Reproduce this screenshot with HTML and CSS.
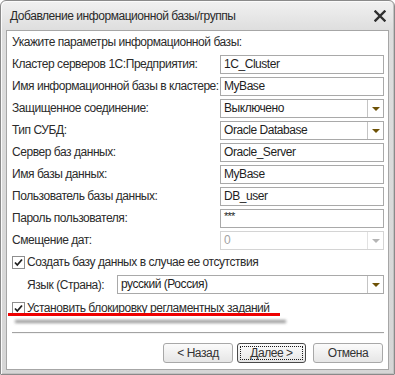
FILE: index.html
```html
<!DOCTYPE html>
<html lang="ru">
<head>
<meta charset="utf-8">
<title>Добавление информационной базы/группы</title>
<link rel="stylesheet" href="styles.css">
</head>
<body>
<div class="window">
  <div class="titlebar">
    <span class="title">Добавление информационной базы/группы</span>
    <svg class="close" width="12" height="12" viewBox="0 0 12 12"><path d="M1.5 1.5 L10.5 10.5 M10.5 1.5 L1.5 10.5" stroke="#2f2f2f" stroke-width="2.4" stroke-linecap="square" fill="none"/></svg>
  </div>
  <div class="client">
    <div class="heading">Укажите параметры информационной базы:</div>
    <div class="form">
      <div class="label">Кластер серверов 1С:Предприятия:</div>
      <div class="field"><span class="val">1C_Cluster</span></div>
      <div class="label">Имя информационной базы в кластере:</div>
      <div class="field"><span class="val">MyBase</span></div>
      <div class="label">Защищенное соединение:</div>
      <div class="field combo"><span class="val">Выключено</span><span class="btn"><i class="tri"></i></span></div>
      <div class="label">Тип СУБД:</div>
      <div class="field combo"><span class="val">Oracle Database</span><span class="btn"><i class="tri"></i></span></div>
      <div class="label">Сервер баз данных:</div>
      <div class="field"><span class="val">Oracle_Server</span></div>
      <div class="label">Имя базы данных:</div>
      <div class="field"><span class="val">MyBase</span></div>
      <div class="label">Пользователь базы данных:</div>
      <div class="field"><span class="val">DB_user</span></div>
      <div class="label">Пароль пользователя:</div>
      <div class="field"><span class="val pass">***</span></div>
      <div class="label">Смещение дат:</div>
      <div class="field combo disabled"><span class="val">0</span><span class="btn"><i class="tri"></i></span></div>
    </div>
    <div class="check-row first">
      <span class="box"><svg width="11" height="11" viewBox="0 0 11 11"><path d="M2 5.5 L4.3 8 L9 2.5" stroke="#1f1f1f" stroke-width="1.8" fill="none"/></svg></span>
      <span class="ctext">Создать базу данных в случае ее отсутствия</span>
    </div>
    <div class="lang-row">
      <div class="lang-label">Язык (Страна):</div>
      <div class="field combo lang"><span class="val">русский (Россия)</span><span class="btn"><i class="tri"></i></span></div>
    </div>
    <div class="check-row second">
      <span class="box"><svg width="11" height="11" viewBox="0 0 11 11"><path d="M2 5.5 L4.3 8 L9 2.5" stroke="#1f1f1f" stroke-width="1.8" fill="none"/></svg></span>
      <span class="ctext">Установить блокировку регламентных заданий</span>
    </div>
    <div class="redline"></div>
    <div class="redshadow"></div>
    <div class="separator"></div>
    <div class="buttons">
      <div class="button back">&lt; Назад</div>
      <div class="button next"><span class="focus">Далее &gt;</span></div>
      <div class="button cancel">Отмена</div>
    </div>
  </div>
</div>
</body>
</html>
```
FILE: styles.css
```css
* { box-sizing: border-box; }
html, body { margin: 0; padding: 0; background: #ffffff; }
body {
  font-family: "Liberation Sans", Arial, sans-serif;
  font-size: 12px;
  letter-spacing: -0.45px;
  color: #2b2b2b;
}
.window {
  width: 395px;
  height: 375px;
  border: 1px solid #8a8a8a;
  border-radius: 6px 6px 1px 1px;
  background: linear-gradient(to bottom, #f1f1f1 0px, #dedede 29px, #d6d6d6 100%);
  box-shadow: inset 1px 1px 0 #fbfbfb, inset -1px -1px 0 #c2c2c2;
  display: flex;
  flex-direction: column;
}
.titlebar {
  height: 29px;
  flex: none;
  display: flex;
  align-items: center;
  justify-content: space-between;
  padding: 0 8px 0 9px;
}
.title {
  font-size: 12px;
  color: #2a2a2a;
  line-height: 14px;
}
.close { display: block; margin-top: 1px; }
.client {
  margin: 0 5px 4px 5px;
  height: 340px;
  border: 1px solid #a6a6a6;
  background: #ffffff;
  padding: 4px 4px 0 5px;
  display: flex;
  flex-direction: column;
}
.heading {
  line-height: 14px;
  height: 14px;
  margin-bottom: 6px;
}
.form {
  display: grid;
  grid-template-columns: 208px 1fr;
  grid-auto-rows: 19px;
  row-gap: 3px;
}
.label {
  line-height: 19px;
  white-space: nowrap;
}
.field {
  height: 19px;
  border: 1px solid #a9a9a9;
  background: #fff;
  display: flex;
  align-items: stretch;
  color: #1e1e1e;
}
.val {
  flex: 1;
  padding-left: 3px;
  line-height: 17px;
  white-space: nowrap;
}
.val.pass { font-size: 11px; line-height: 12px; letter-spacing: -0.8px; }
.btn {
  width: 16px;
  flex: none;
  border-left: 1px solid #c4c4c4;
  display: flex;
  align-items: center;
  justify-content: center;
}
.tri {
  display: block;
  width: 0;
  height: 0;
  border-left: 4px solid transparent;
  border-right: 4px solid transparent;
  border-top: 4px solid #6e5206;
  margin-top: 1px;
}
.disabled { border-color: #d4d4d4; color: #a3a3a3; }
.disabled .btn { border-left-color: #e2e2e2; }
.disabled .tri { border-top-color: #b5b5b5; }
.check-row {
  display: flex;
  align-items: center;
  height: 14px;
}
.check-row.first { margin-top: 5px; }
.check-row.second { margin-top: 7px; }
.box {
  width: 13px;
  height: 13px;
  border: 1px solid #8e8e8e;
  background: #fff;
  display: flex;
  align-items: center;
  justify-content: center;
  flex: none;
}
.box svg { display: block; }
.ctext { margin-left: 2px; line-height: 14px; white-space: nowrap; }
.lang-row {
  display: flex;
  align-items: center;
  margin-top: 6px;
  padding-left: 15px;
}
.lang-label { width: 90px; flex: none; }
.field.lang { flex: 1; }
.redline {
  height: 3px;
  width: 272px;
  margin-left: -4px;
  margin-top: -2px;
  background: #ee0000;
}
.redshadow {
  height: 3px;
  width: 271px;
  margin-left: 3px;
  margin-top: 4px;
  background: #808080;
  filter: blur(1.5px);
  opacity: 0.85;
}
.separator {
  margin-top: 9px;
  height: 2px;
  border-top: 1px solid #a3a3a3;
  border-bottom: 1px solid #f4f4f4;
}
.buttons {
  display: flex;
  justify-content: flex-end;
  margin-top: 9px;
  padding-right: 1px;
}
.button {
  height: 20px;
  border: 1px solid #a8a8a8;
  border-radius: 3px;
  background: linear-gradient(to bottom, #fbfbfb, #e6e6e6);
  display: flex;
  align-items: center;
  justify-content: center;
  color: #333;
  line-height: 14px;
}
.back { width: 70px; }
.next { width: 69px; margin-left: 4px; border-color: #4a4a4a; padding: 2px; }
.cancel { width: 70px; margin-left: 7px; }
.focus {
  flex: 1;
  align-self: stretch;
  border: 1px dotted #1a1a1a;
  display: flex;
  align-items: center;
  justify-content: center;
}
```
